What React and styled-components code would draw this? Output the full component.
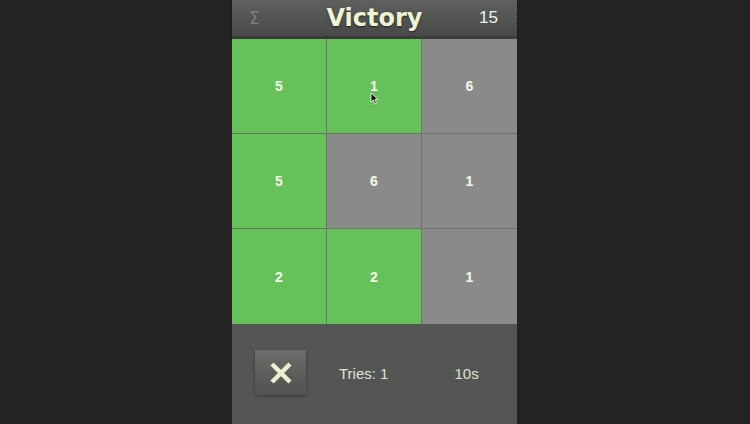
import React from "react";
import styled, { createGlobalStyle } from "styled-components";

const Global = createGlobalStyle`
  html, body { margin: 0; padding: 0; background: #222322; height: 100%; overflow: hidden; }
  #root { height: 424px; }
`;

const Page = styled.div`
  height: 424px;
  display: flex;
  justify-content: center;
  padding-right: 1px;
  background: #222322;
`;

const Panel = styled.div`
  width: 285px;
  display: flex;
  flex-direction: column;
  background: #545654;
`;

const Header = styled.div`
  height: 36px;
  border-bottom: 3px solid #3a3c3a;
  background: linear-gradient(#5f615f, #474947);
  display: grid;
  grid-template-columns: 50px 1fr 50px;
  align-items: center;
  box-shadow: 0 1px 2px rgba(0,0,0,0.4);
`;

const Sigma = styled.span`
  font-family: "DejaVu Sans", sans-serif;
  font-size: 17px;
  color: #7b7d7b;
  padding-left: 17px;
`;

const Title = styled.h1`
  margin: 0;
  text-align: center;
  font-family: "DejaVu Sans", sans-serif;
  font-weight: bold;
  font-size: 24px;
  color: #eef3d2;
  text-shadow: 0 1px 2px rgba(0,0,0,0.6);
`;

const Score = styled.span`
  font-family: "Liberation Sans", sans-serif;
  font-size: 17px;
  color: #f2f2ec;
  text-align: right;
  padding-right: 19px;
`;

const Board = styled.div`
  position: relative;
  display: grid;
  grid-template-columns: 94px 94px 95px;
  grid-template-rows: 94px 94px 95px;
  gap: 1px;
  background: #6c736a;
`;

const Cell = styled.div`
  display: flex;
  align-items: center;
  justify-content: center;
  background: ${(p) => (p.$on ? "#67c15a" : "#898b89")};
  font-family: "Liberation Sans", sans-serif;
  font-weight: bold;
  font-size: 14px;
  color: #f6f8ea;
`;

const Cursor = styled.svg`
  position: absolute;
  left: 138px;
  top: 53px;
`;

const Footer = styled.div`
  flex: 1;
  display: flex;
  align-items: flex-start;
  padding: 26px 0 0 23px;
  background: #545654;
`;

const CloseButton = styled.button`
  width: 51px;
  height: 45px;
  border: none;
  padding: 0;
  display: flex;
  align-items: center;
  justify-content: center;
  background: linear-gradient(#6c6e6c, #5a5c5a 60%, #525452);
  box-shadow: 0 1px 3px rgba(0,0,0,0.35);
`;

const Info = styled.span`
  font-family: "Liberation Sans", sans-serif;
  font-size: 15px;
  color: #dfe2d6;
  line-height: 47px;
  margin-left: ${(p) => p.$gap}px;
`;

const cells = [
  [5, true], [1, true], [6, false],
  [5, true], [6, false], [1, false],
  [2, true], [2, true], [1, false],
];

export default function App() {
  return (
    <Page>
      <Global />
      <Panel>
        <Header>
          <Sigma>Σ</Sigma>
          <Title>Victory</Title>
          <Score>15</Score>
        </Header>
        <Board>
          {cells.map(([n, on], i) => (
            <Cell key={i} $on={on}>{n}</Cell>
          ))}
          <Cursor width="9" height="13" viewBox="0 0 9 13">
            <path d="M1 1 L1 10 L3.2 8 L5 12 L6.5 11.3 L4.8 7.5 L8 7.5 Z" fill="#111" stroke="#fff" strokeWidth="0.8" />
          </Cursor>
        </Board>
        <Footer>
          <CloseButton aria-label="close">
            <svg width="26" height="26" viewBox="0 0 26 26">
              <path d="M4 4 L22 22 M22 4 L4 22" stroke="#e9f1cf" strokeWidth="4.5" strokeLinecap="butt" />
            </svg>
          </CloseButton>
          <Info $gap={33}>Tries: 1</Info>
          <Info $gap={66}>10s</Info>
        </Footer>
      </Panel>
    </Page>
  );
}
